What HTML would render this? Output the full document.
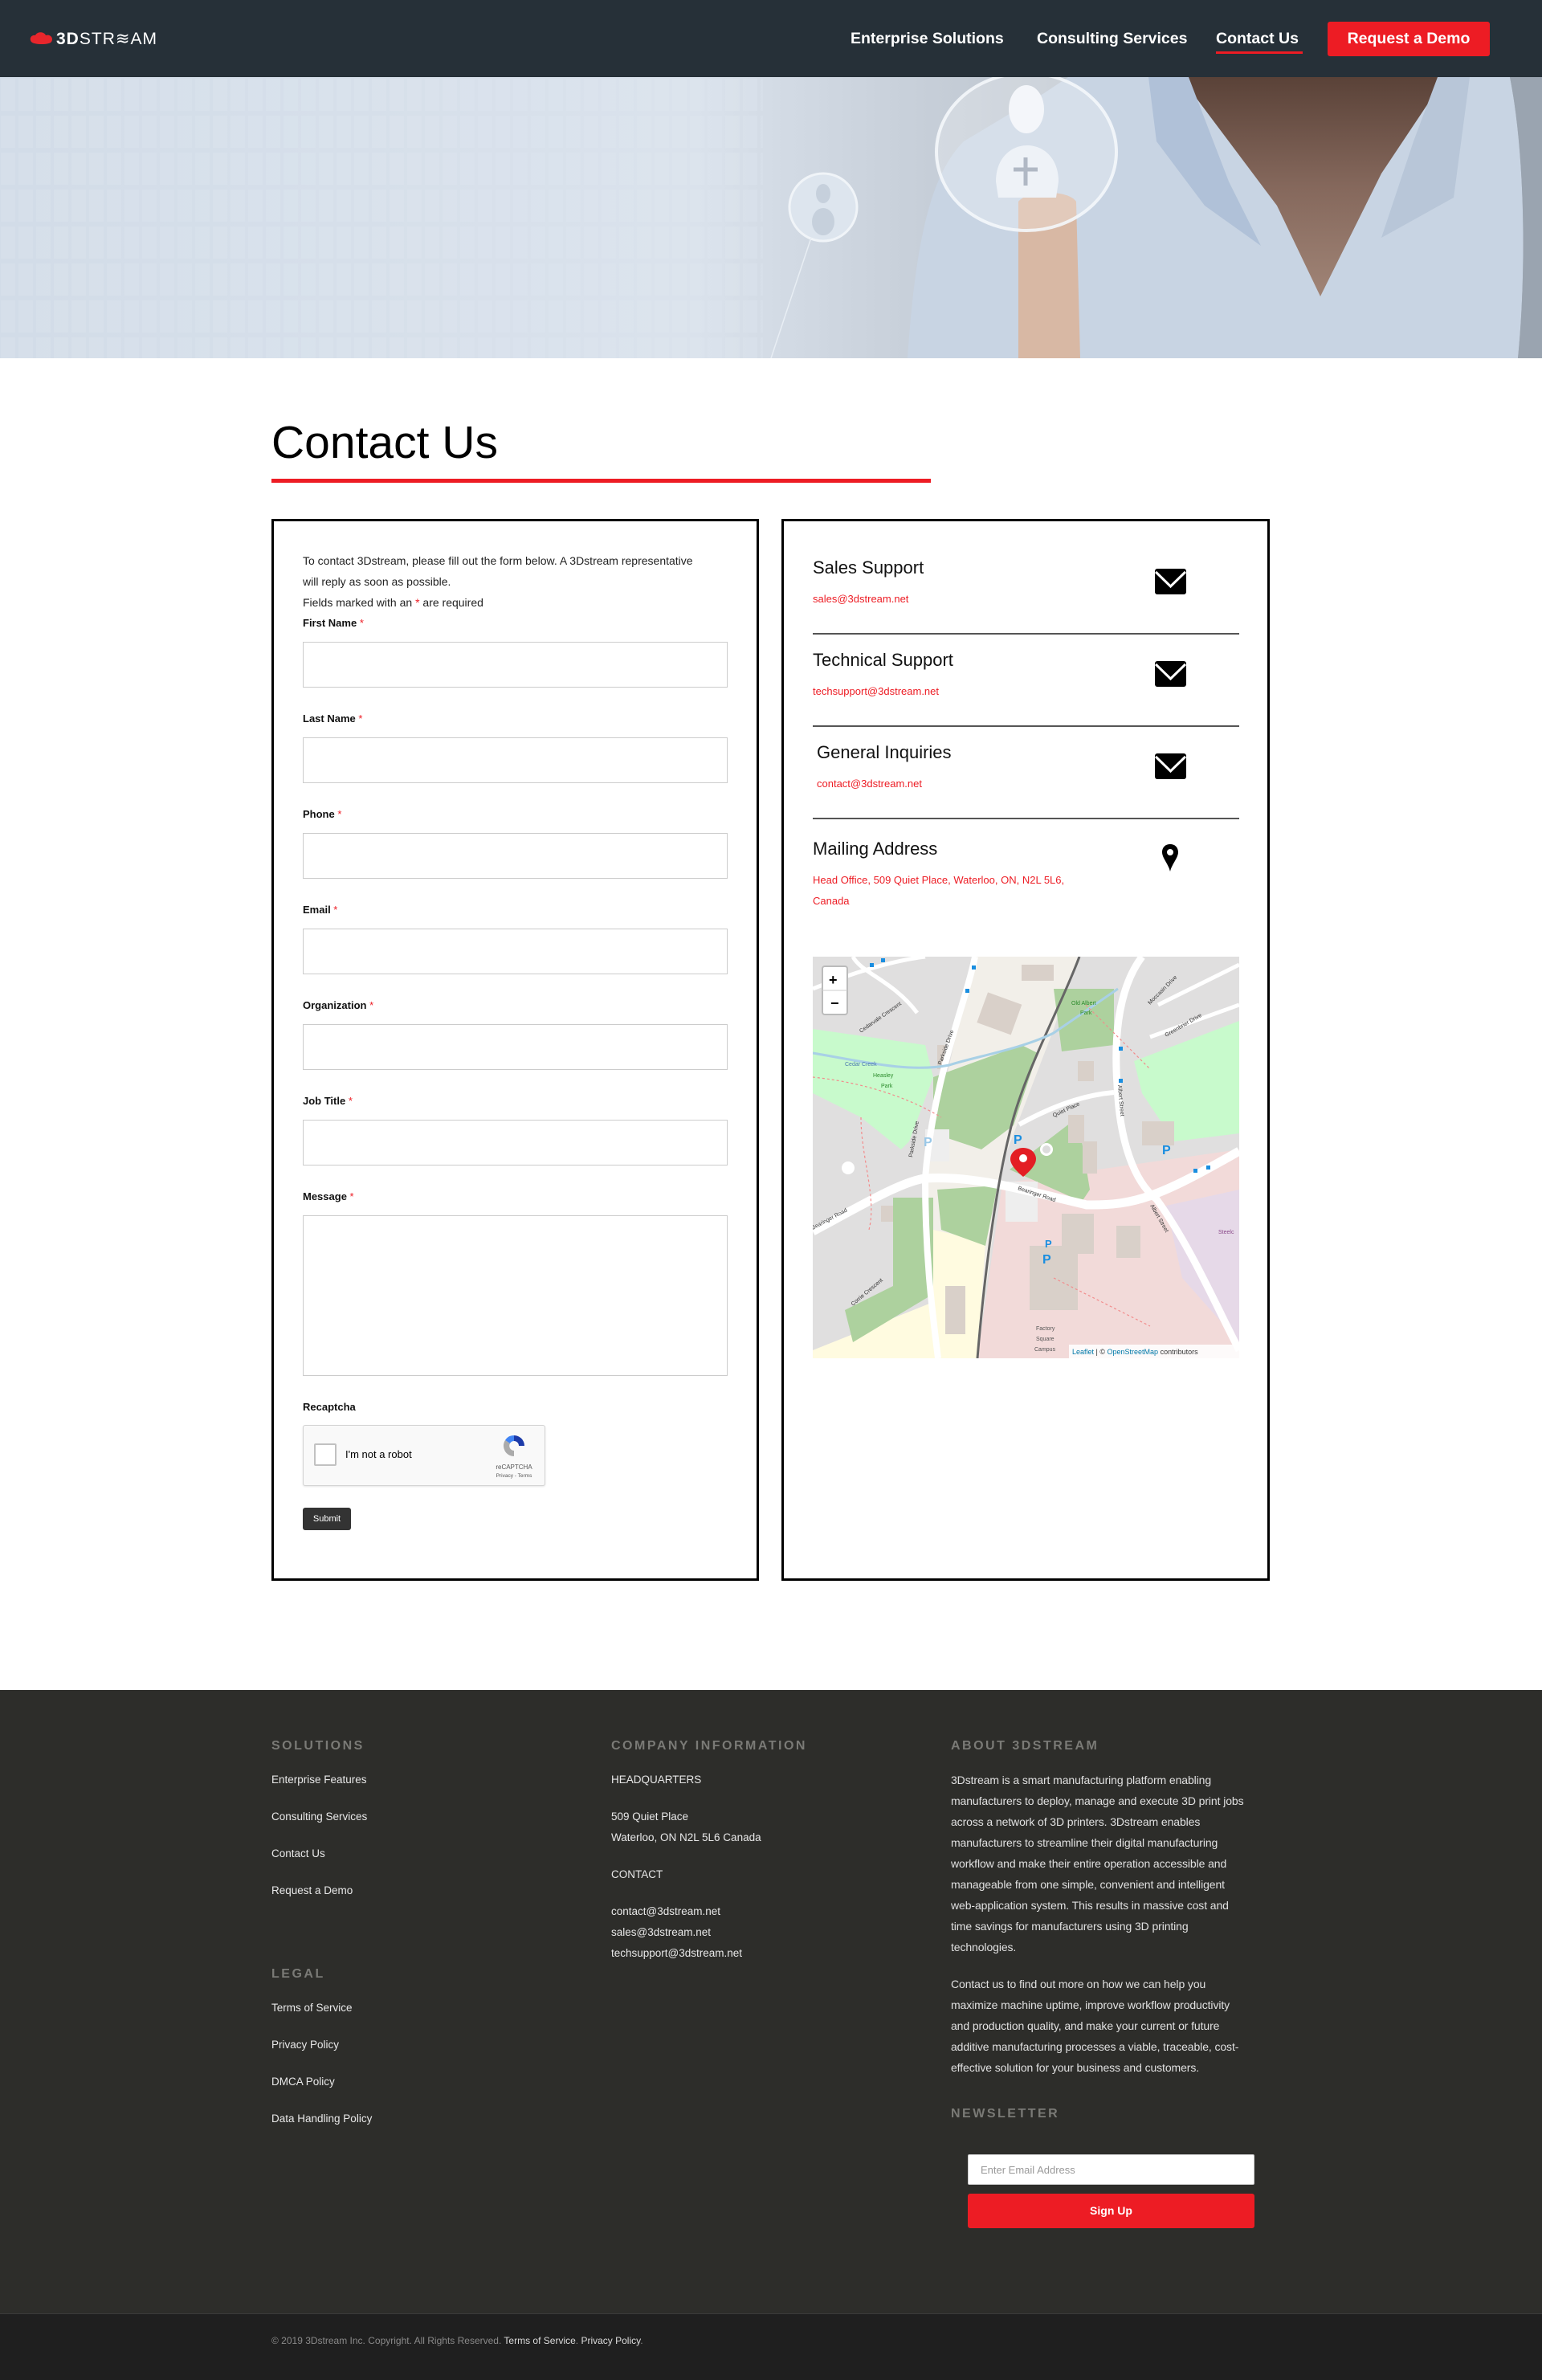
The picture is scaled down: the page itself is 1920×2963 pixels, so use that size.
<!DOCTYPE html>
<html><head><meta charset="utf-8">
<style>
*{margin:0;padding:0;box-sizing:border-box}
body{width:1920px;height:2963px;position:relative;background:#fff;font-family:"Liberation Sans",Arial,sans-serif;overflow:hidden}
.a{position:absolute}
.nav{left:0;top:0;width:1920px;height:96px;background:#263038}
.nl{color:#fff;font-weight:bold;font-size:19.5px;top:37px;white-space:nowrap}
.ft{font-size:14px;color:#222;white-space:nowrap}
.lbl{font-size:13px;font-weight:bold;color:#111;left:377px}
.lbl span{color:#ed1c24;font-weight:normal}
.inp{left:377px;width:529px;height:57px;border:1px solid #ccc;background:#fff}
.box{border:3px solid #000;top:646px;height:1322px}
.h3{font-size:22px;color:#111;white-space:nowrap}
.em{font-size:13px;color:#ed1c24;white-space:nowrap}
.sep{left:1012px;width:531px;height:2px;background:#555}
.env{width:39px;height:32px}
.fh{font-size:16px;font-weight:bold;letter-spacing:2.5px;color:#7a7a76;white-space:nowrap}
.fl{font-size:13.5px;color:#e8e8e8;white-space:nowrap}
.ab{font-size:14px;color:#e0e0e0;line-height:26px;white-space:nowrap;letter-spacing:-0.1px}
</style></head><body>

<div class="a nav"></div>
<svg class="a" style="left:36px;top:38px" width="34" height="20" viewBox="0 0 34 20">
<path d="M3 14 C0 10 3 5 8 6 C10 1 19 1 21 6 C27 4 31 10 28 14 C26 18 6 18 3 14Z" fill="#e8262c"/>
</svg>
<div class="a" style="left:70px;top:36px;font-size:21px;color:#fff;white-space:nowrap;letter-spacing:1px"><b>3D</b>STR≋AM</div>
<div class="a nl" style="left:1059px">Enterprise Solutions</div>
<div class="a nl" style="left:1291px">Consulting Services</div>
<div class="a nl" style="left:1514px">Contact Us</div>
<div class="a" style="left:1514px;top:64px;width:108px;height:3px;background:#ed1c24"></div>
<div class="a" style="left:1653px;top:27px;width:202px;height:43px;background:#ed1c24;border-radius:3px"></div>
<div class="a nl" style="left:1653px;width:202px;text-align:center;top:37px">Request a Demo</div>

<svg class="a" style="left:0;top:96px" width="1920" height="350" viewBox="0 0 1920 350">
<defs>
<linearGradient id="bg" x1="0" x2="1" y1="0" y2="0">
<stop offset="0" stop-color="#d2dce8"/><stop offset=".45" stop-color="#dae2ec"/><stop offset=".58" stop-color="#c9d1db"/><stop offset=".75" stop-color="#b5bdc6"/><stop offset="1" stop-color="#a5acb6"/></linearGradient>
<linearGradient id="sk" x1="0" x2="0" y1="0" y2="1"><stop offset="0" stop-color="#5a4238"/><stop offset=".5" stop-color="#85685c"/><stop offset="1" stop-color="#a08476"/></linearGradient>
<pattern id="gr" width="22" height="46" patternUnits="userSpaceOnUse"><rect x="1" y="2" width="18" height="40" fill="#e2e9f1" opacity=".5"/></pattern>
</defs>
<rect width="1920" height="350" fill="url(#bg)"/>
<rect width="950" height="350" fill="url(#gr)" opacity=".5"/>
<path d="M1130 350 C1140 200 1160 120 1200 80 L1300 20 L1330 0 L1880 0 C1900 100 1900 250 1890 350Z" fill="#c8d4e3"/>
<path d="M1880 0 L1920 0 L1920 350 L1890 350 C1900 250 1900 100 1880 0Z" fill="#9aa4b0"/>
<path d="M1470 0 L1800 0 L1720 120 L1644 273 L1590 160 Z" fill="url(#sk)"/>
<path d="M1430 0 L1480 0 L1530 130 L1570 210 L1500 160 L1440 80 Z" fill="#b0c1d8"/>
<path d="M1790 0 L1830 0 L1810 150 L1720 200 L1760 80 Z" fill="#b8c6d8"/>
<path d="M1268 155 L1268 350 L1345 350 L1340 155 C1330 140 1280 140 1268 155Z" fill="#d8b8a4"/>
<ellipse cx="1278" cy="93" rx="112" ry="98" fill="#fff" opacity=".25"/>
<ellipse cx="1278" cy="93" rx="112" ry="98" fill="none" stroke="#f4f7fb" stroke-width="4" opacity=".9"/>
<ellipse cx="1278" cy="40" rx="22" ry="30" fill="#f4f6fa"/>
<path d="M1240 130 C1240 70 1318 70 1318 130 L1315 150 L1243 150Z" fill="#eef2f7"/>
<path d="M1262 115 L1292 115 M1277 100 L1277 135" stroke="#b0b8c4" stroke-width="5"/>
<ellipse cx="1025" cy="162" rx="42" ry="42" fill="#dde5ee" stroke="#f0f4f8" stroke-width="3"/>
<ellipse cx="1025" cy="145" rx="9" ry="12" fill="#c6d0dc"/>
<ellipse cx="1025" cy="180" rx="14" ry="17" fill="#c6d0dc"/>
<path d="M1010 200 L960 350" stroke="#e8eef4" stroke-width="1.5"/>
</svg>

<div class="a" style="left:338px;top:518px;font-size:57px;color:#000;white-space:nowrap">Contact Us</div>
<div class="a" style="left:338px;top:596px;width:821px;height:5px;background:#ed1c24"></div>

<div class="a box" style="left:338px;width:607px"></div>
<div class="a box" style="left:973px;width:608px"></div>

<div class="a ft" style="left:377px;top:690px">To contact 3Dstream, please fill out the form below. A 3Dstream representative</div>
<div class="a ft" style="left:377px;top:716px">will reply as soon as possible.</div>
<div class="a ft" style="left:377px;top:742px">Fields marked with an <span style="color:#ed1c24">*</span> are required</div>

<div class="a lbl" style="top:768px">First Name <span>*</span></div>
<div class="a inp" style="top:799px"></div>
<div class="a lbl" style="top:887px">Last Name <span>*</span></div>
<div class="a inp" style="top:918px"></div>
<div class="a lbl" style="top:1006px">Phone <span>*</span></div>
<div class="a inp" style="top:1037px"></div>
<div class="a lbl" style="top:1125px">Email <span>*</span></div>
<div class="a inp" style="top:1156px"></div>
<div class="a lbl" style="top:1244px">Organization <span>*</span></div>
<div class="a inp" style="top:1275px"></div>
<div class="a lbl" style="top:1363px">Job Title <span>*</span></div>
<div class="a inp" style="top:1394px"></div>
<div class="a lbl" style="top:1482px">Message <span>*</span></div>
<div class="a inp" style="top:1513px;height:200px"></div>
<div class="a lbl" style="top:1744px">Recaptcha</div>
<div class="a" style="left:377px;top:1774px;width:302px;height:76px;background:#f9f9f9;border:1px solid #d3d3d3;border-radius:3px;box-shadow:0 1px 2px rgba(0,0,0,.1)"></div>
<div class="a" style="left:391px;top:1797px;width:28px;height:28px;border:2px solid #c1c1c1;background:#fff;border-radius:2px"></div>
<div class="a" style="left:430px;top:1803px;font-size:13px;color:#000;white-space:nowrap">I'm not a robot</div>
<svg class="a" style="left:624px;top:1784px" width="32" height="32" viewBox="0 0 32 32"><path d="M16 3 A13 13 0 0 1 29 16 L22 16 A6 6 0 0 0 16 10Z" fill="#1c3aa9"/><path d="M16 3 A13 13 0 0 0 5 9 L11 13 A6 6 0 0 1 16 10Z" fill="#4285f4"/><path d="M5 9 A13 13 0 0 0 16 29 L16 22 A6 6 0 0 1 11 13Z" fill="#ababab"/></svg>
<div class="a" style="left:610px;top:1822px;font-size:8px;color:#555;width:60px;text-align:center">reCAPTCHA</div>
<div class="a" style="left:610px;top:1834px;font-size:6.5px;color:#555;width:60px;text-align:center">Privacy - Terms</div>
<div class="a" style="left:377px;top:1877px;width:60px;height:28px;background:#333;border-radius:3px;color:#fff;font-size:11px;text-align:center;line-height:28px">Submit</div>

<div class="a h3" style="left:1012px;top:694px">Sales Support</div>
<div class="a em" style="left:1012px;top:738px">sales@3dstream.net</div>
<div class="a sep" style="top:788px"></div>
<div class="a h3" style="left:1012px;top:809px">Technical Support</div>
<div class="a em" style="left:1012px;top:853px">techsupport@3dstream.net</div>
<div class="a sep" style="top:903px"></div>
<div class="a h3" style="left:1017px;top:924px">General Inquiries</div>
<div class="a em" style="left:1017px;top:968px">contact@3dstream.net</div>
<div class="a sep" style="top:1018px"></div>
<div class="a h3" style="left:1012px;top:1044px">Mailing Address</div>
<div class="a em" style="left:1012px;top:1088px">Head Office, 509 Quiet Place, Waterloo, ON, N2L 5L6,</div>
<div class="a em" style="left:1012px;top:1114px">Canada</div>

<svg class="a env" style="left:1438px;top:708px" viewBox="0 0 39 32"><rect width="39" height="32" rx="3" fill="#000"/><path d="M1 4 L19.5 22 L38 4" stroke="#fff" stroke-width="3" fill="none"/></svg>
<svg class="a env" style="left:1438px;top:823px" viewBox="0 0 39 32"><rect width="39" height="32" rx="3" fill="#000"/><path d="M1 4 L19.5 22 L38 4" stroke="#fff" stroke-width="3" fill="none"/></svg>
<svg class="a env" style="left:1438px;top:938px" viewBox="0 0 39 32"><rect width="39" height="32" rx="3" fill="#000"/><path d="M1 4 L19.5 22 L38 4" stroke="#fff" stroke-width="3" fill="none"/></svg>
<svg class="a" style="left:1446px;top:1050px" width="22" height="36" viewBox="0 0 22 36"><path d="M11 1 C4 1 1 6 1 11 C1 18 9 26 11 35 C13 26 21 18 21 11 C21 6 18 1 11 1Z" fill="#000"/><circle cx="11" cy="11" r="4" fill="#fff"/></svg>

<svg class="a" style="left:1012px;top:1191px" width="531" height="500" viewBox="0 0 531 500">
<rect width="531" height="500" fill="#e0dfdf"/>
<path d="M200 0 L330 0 L300 90 L235 260 L205 500 L150 500 L140 270 Z" fill="#f2efe9"/>
<path d="M236 282 L531 240 L531 500 L205 500Z" fill="#f2dad9"/>
<path d="M150 340 L215 355 L205 500 L0 500 L0 490 L150 430Z" fill="#fffbe0"/>
<path d="M0 90 L140 110 L150 150 L120 230 L110 240 L60 200 L0 170Z" fill="#c8facc"/>
<path d="M300 40 L375 40 L375 110 L310 118 Z" fill="#add19e"/>
<path d="M400 130 L531 80 L531 220 L450 230 L410 170Z" fill="#c8facc"/>
<path d="M150 150 L260 110 L280 120 L250 210 L210 240 L150 220Z" fill="#add19e"/>
<path d="M245 265 L330 200 L345 290 L335 305 Z" fill="#add19e"/>
<path d="M155 290 L230 285 L215 360 L160 340Z" fill="#add19e"/>
<path d="M100 300 L150 300 L150 420 L50 480 L40 440 L100 410Z" fill="#add19e"/>
<path d="M440 310 L531 290 L531 480 L460 400Z" fill="#e6d9e8"/>
<g fill="#d9d0c9">
<rect x="210" y="50" width="45" height="40" transform="rotate(20 230 70)"/><rect x="260" y="10" width="40" height="20"/><rect x="330" y="130" width="20" height="25"/><rect x="318" y="197" width="20" height="35"/><rect x="336" y="230" width="18" height="40"/><rect x="410" y="205" width="40" height="30"/><rect x="310" y="320" width="40" height="50"/><rect x="270" y="360" width="60" height="80"/><rect x="378" y="335" width="30" height="40"/><rect x="165" y="410" width="25" height="60"/><rect x="85" y="310" width="15" height="20"/><rect x="155" y="110" width="10" height="30"/>
</g>
<rect x="240" y="280" width="40" height="50" fill="#eee"/><rect x="140" y="215" width="30" height="40" fill="#eee"/>
<path d="M0 342 C60 310 110 280 140 276 C200 272 260 290 341 309 C400 310 430 300 531 242" stroke="#fff" stroke-width="11" fill="none"/>
<path d="M202 0 C190 60 150 150 140 276 C140 380 150 450 156 500" stroke="#fff" stroke-width="8" fill="none"/>
<path d="M410 0 C380 40 375 100 379 160 C382 230 400 280 428 302 C470 360 500 430 531 490" stroke="#fff" stroke-width="9" fill="none"/>
<path d="M257 209 C300 185 340 172 375 169" stroke="#fff" stroke-width="6" fill="none"/>
<path d="M0 40 C50 20 100 5 140 0 M130 70 C100 30 60 20 50 0 M420 100 L531 60 M430 60 L531 10" stroke="#fff" stroke-width="5" fill="none"/>
<path d="M332 0 C310 60 260 150 245 220 C230 280 215 380 205 500" stroke="#666" stroke-width="3" fill="none"/>
<path d="M0 120 C60 130 120 145 170 135 C200 125 260 115 300 95 L380 40" stroke="#a8d0e6" stroke-width="3" fill="none"/>
<path d="M0 150 C50 155 110 170 160 200 M60 200 C60 250 80 300 70 340 M340 60 C360 80 380 100 420 140 M300 400 C340 420 380 440 420 460" stroke="#f28c8c" stroke-width="1.2" stroke-dasharray="3 3" fill="none"/>
<circle cx="44" cy="263" r="8" fill="#fff"/><circle cx="291" cy="240" r="8" fill="#fff"/><circle cx="291" cy="240" r="5" fill="#dcdcdc"/>
<g fill="#1a8ee0" font-family="Liberation Sans" font-size="16" font-weight="bold"><text x="250" y="233">P</text><text x="435" y="246">P</text><text x="286" y="382">P</text><text x="289" y="362" font-size="13">P</text><text x="138" y="236" fill="#9ac8e8">P</text></g>
<g fill="#1a8ee0"><rect x="71" y="8" width="5" height="5"/><rect x="85" y="2" width="5" height="5"/><rect x="198" y="11" width="5" height="5"/><rect x="190" y="40" width="5" height="5"/><rect x="381" y="112" width="5" height="5"/><rect x="381" y="152" width="5" height="5"/><rect x="474" y="264" width="5" height="5"/><rect x="490" y="260" width="5" height="5"/></g>
<g font-family="Liberation Sans" font-size="7" fill="#333"><text x="60" y="95" transform="rotate(-35 60 95)">Cedarvale Crescent</text><text x="160" y="135" transform="rotate(-70 160 135)">Parkside Drive</text><text x="124" y="250" transform="rotate(-80 124 250)">Parkside Drive</text><text x="300" y="200" transform="rotate(-25 300 200)">Quiet Place</text><text x="255" y="290" transform="rotate(18 255 290)">Bearinger Road</text><text x="0" y="340" transform="rotate(-28 0 340)">Bearinger Road</text><text x="380" y="160" transform="rotate(85 380 160)">Albert Street</text><text x="420" y="310" transform="rotate(60 420 310)">Albert Street</text><text x="420" y="60" transform="rotate(-45 420 60)">Moccasin Drive</text><text x="440" y="100" transform="rotate(-30 440 100)">Greenbrier Drive</text><text x="50" y="435" transform="rotate(-40 50 435)">Corrie Crescent</text><text x="278" y="465" fill="#555">Factory</text><text x="278" y="478" fill="#555">Square</text><text x="276" y="491" fill="#555">Campus</text><text x="40" y="136" fill="#4a7ab0">Cedar Creek</text><text x="75" y="150" fill="#2a8a2a">Heasley</text><text x="85" y="163" fill="#2a8a2a">Park</text><text x="322" y="60" fill="#2a8a2a">Old Albert</text><text x="333" y="72" fill="#2a8a2a">Park</text><text x="505" y="345" fill="#8a4a8a">Steelc</text></g>
<rect x="12" y="12" width="31" height="60" rx="3" fill="#fff" stroke="#bbb" stroke-width="2"/><line x1="12" y1="42" x2="43" y2="42" stroke="#ccc"/>
<text x="20" y="35" font-family="Liberation Sans" font-size="18" font-weight="bold">+</text><text x="22" y="64" font-family="Liberation Sans" font-size="18" font-weight="bold">−</text>
<path d="M262 238 C252 238 246 245 246 252 C246 262 262 274 262 274 C262 274 278 262 278 252 C278 245 272 238 262 238Z" fill="#e31e24"/><circle cx="262" cy="251" r="5" fill="#fff"/>
<rect x="319" y="483" width="212" height="17" fill="#fff" opacity=".85"/>
<text x="323" y="495" font-family="Liberation Sans" font-size="9" fill="#333"><tspan fill="#0078a8">Leaflet</tspan> | © <tspan fill="#0078a8">OpenStreetMap</tspan> contributors</text>
</svg>

<div class="a" style="left:0;top:2104px;width:1920px;height:776px;background:#2d2d2a"></div>
<div class="a" style="left:0;top:2880px;width:1920px;height:83px;background:#1f1f1f;border-top:1px solid #3a3a3a"></div>

<div class="a fh" style="left:338px;top:2165px">SOLUTIONS</div>
<div class="a fl" style="left:338px;top:2208px">Enterprise Features</div>
<div class="a fl" style="left:338px;top:2254px">Consulting Services</div>
<div class="a fl" style="left:338px;top:2300px">Contact Us</div>
<div class="a fl" style="left:338px;top:2346px">Request a Demo</div>
<div class="a fh" style="left:338px;top:2449px">LEGAL</div>
<div class="a fl" style="left:338px;top:2492px">Terms of Service</div>
<div class="a fl" style="left:338px;top:2538px">Privacy Policy</div>
<div class="a fl" style="left:338px;top:2584px">DMCA Policy</div>
<div class="a fl" style="left:338px;top:2630px">Data Handling Policy</div>

<div class="a fh" style="left:761px;top:2165px">COMPANY INFORMATION</div>
<div class="a fl" style="left:761px;top:2208px">HEADQUARTERS</div>
<div class="a fl" style="left:761px;top:2254px">509 Quiet Place</div>
<div class="a fl" style="left:761px;top:2280px">Waterloo, ON N2L 5L6 Canada</div>
<div class="a fl" style="left:761px;top:2326px">CONTACT</div>
<div class="a fl" style="left:761px;top:2372px">contact@3dstream.net</div>
<div class="a fl" style="left:761px;top:2398px">sales@3dstream.net</div>
<div class="a fl" style="left:761px;top:2424px">techsupport@3dstream.net</div>

<div class="a fh" style="left:1184px;top:2165px">ABOUT 3DSTREAM</div>
<div class="a ab" style="left:1184px;top:2203px">3Dstream is a smart manufacturing platform enabling<br>manufacturers to deploy, manage and execute 3D print jobs<br>across a network of 3D printers. 3Dstream enables<br>manufacturers to streamline their digital manufacturing<br>workflow and make their entire operation accessible and<br>manageable from one simple, convenient and intelligent<br>web-application system. This results in massive cost and<br>time savings for manufacturers using 3D printing<br>technologies.</div>
<div class="a ab" style="left:1184px;top:2457px">Contact us to find out more on how we can help you<br>maximize machine uptime, improve workflow productivity<br>and production quality, and make your current or future<br>additive manufacturing processes a viable, traceable, cost-<br>effective solution for your business and customers.</div>
<div class="a fh" style="left:1184px;top:2623px">NEWSLETTER</div>
<div class="a" style="left:1205px;top:2682px;width:357px;height:38px;background:#fff;border:1px solid #ccc;border-radius:2px;font-size:13px;color:#999;padding:11px 15px">Enter Email Address</div>
<div class="a" style="left:1205px;top:2731px;width:357px;height:43px;background:#ed1c24;border-radius:3px;color:#fff;font-weight:bold;font-size:14px;text-align:center;line-height:43px">Sign Up</div>

<div class="a" style="left:338px;top:2907px;font-size:12px;color:#8a8a8a;white-space:nowrap">© 2019 3Dstream Inc. Copyright. All Rights Reserved. <span style="color:#ddd">Terms of Service</span>. <span style="color:#ddd">Privacy Policy</span>.</div>
</body></html>
